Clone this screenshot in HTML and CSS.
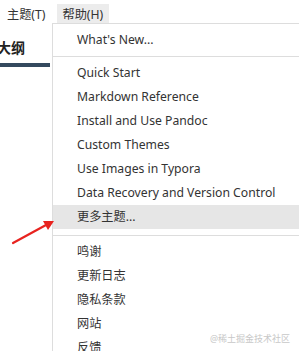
FILE: index.html
```html
<!DOCTYPE html>
<html lang="zh-CN">
<head>
  <meta charset="UTF-8">
  <title>Typora 帮助菜单</title>
  <link rel="stylesheet" href="styles.css">
</head>
<body>
  <div class="menubar">
    <span class="menubar-item">主题(T)</span>
    <span class="menubar-item active">帮助(H)</span>
  </div>

  <div class="main">
    <div class="sidebar">
      <div class="sidebar-title">大纲</div>
      <div class="sidebar-bar"></div>
    </div>

    <ul class="menu">
      <li>What's New...</li>
      <li class="sep"></li>
      <li>Quick Start</li>
      <li>Markdown Reference</li>
      <li>Install and Use Pandoc</li>
      <li>Custom Themes</li>
      <li>Use Images in Typora</li>
      <li>Data Recovery and Version Control</li>
      <li class="hover">更多主题...</li>
      <li class="sep sep-lower"></li>
      <li>鸣谢</li>
      <li>更新日志</li>
      <li>隐私条款</li>
      <li>网站</li>
      <li>反馈</li>
    </ul>
  </div>

  <!-- annotation arrow pointing at the highlighted item -->
  <svg class="arrow" width="60" height="40" viewBox="0 0 60 40">
    <line x1="13" y1="33" x2="46" y2="15" stroke="#e8231f" stroke-width="2.2" stroke-linecap="round"/>
    <polygon points="54,11 43,11 48,20" fill="#e8231f"/>
  </svg>

  <div class="watermark">@稀土掘金技术社区</div>
</body>
</html>
```

FILE: styles.css
```css
body {
  margin: 0;
  width: 299px;
  height: 351px;
  overflow: hidden;
  background: #fff;
  color: #333;
  font-family: "Noto Sans", "Noto Sans CJK SC", sans-serif;
  font-size: 12.2px;
  position: relative;
}

.menubar {
  display: flex;
  align-items: flex-end;
  height: 23px;
  padding-left: 2px;
}

.menubar-item {
  display: flex;
  align-items: center;
  height: 19px;
  padding: 0 5px;
}

.menubar-item.active {
  background: #ececec;
  margin-left: 7px;
  padding: 0 6px 0 5px;
}

.main {
  display: flex;
  border-top: 1px solid #ddd;
  margin-left: 52px;
}

.sidebar {
  width: 52px;
  margin-left: -52px;
  background: #fff;
  margin-top: -1px;
}

.sidebar-title {
  font-weight: bold;
  font-size: 14px;
  color: #222;
  margin-left: -3px;
  padding-top: 16px;
  height: 24px;
  line-height: 18px;
}

.sidebar-bar {
  height: 4px;
  background: #34495e;
  margin-right: 2px;
}

.menu {
  flex: 1;
  list-style: none;
  margin: 0;
  padding: 4px 0 0;
  border-left: 1px solid #ddd;
}

.menu li {
  height: 24px;
  line-height: 24px;
  padding-left: 24px;
  white-space: nowrap;
}

.menu li.sep {
  height: 1px;
  padding: 0;
  margin: 4px 0;
  background: #ddd;
}

.menu li.sep-lower {
  margin-top: 6px;
}

.menu li.hover {
  background: #e6e6e6;
}

.arrow {
  position: absolute;
  left: 0;
  top: 210px;
}

.watermark {
  position: absolute;
  right: 9px;
  top: 332px;
  font-size: 9px;
  color: #c8c8c8;
}
```
